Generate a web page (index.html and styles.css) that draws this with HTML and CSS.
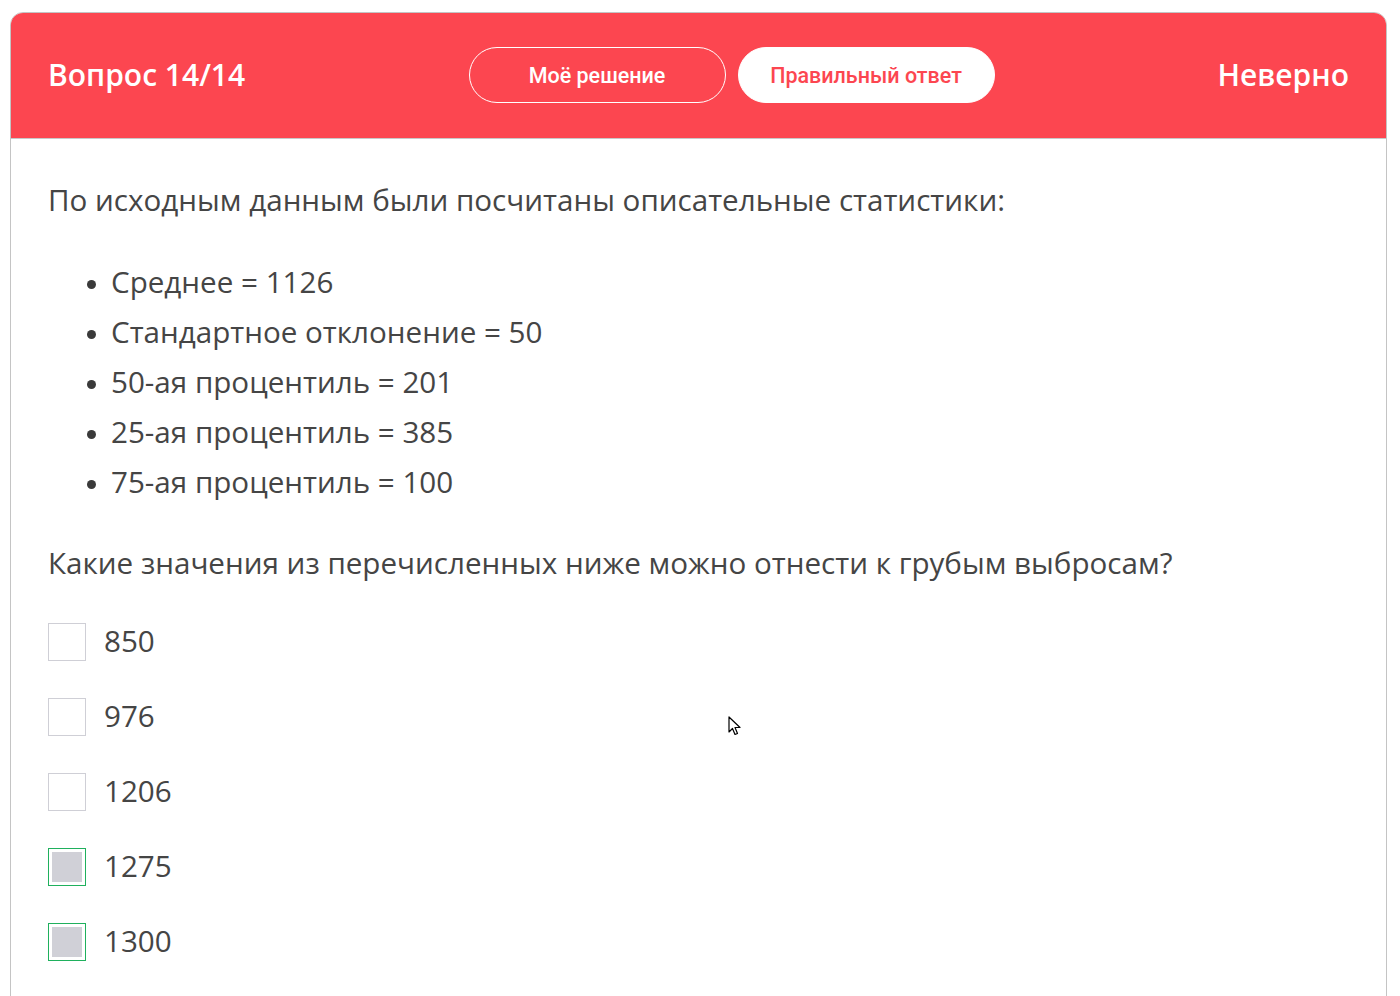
FILE: index.html
```html
<!DOCTYPE html>
<html lang="ru">
<head>
<meta charset="utf-8">
<title>Вопрос 14/14</title>
<link rel="stylesheet" href="styles.css">
</head>
<body>
<div class="card">
  <header class="head">
    <div class="title">Вопрос 14/14</div>
    <div class="tabs">
      <button class="tab tab-outline">Моё решение</button>
      <button class="tab tab-solid">Правильный ответ</button>
    </div>
    <div class="verdict">Неверно</div>
  </header>
  <main class="body">
    <p class="para">По исходным данным были посчитаны описательные статистики:</p>
    <ul class="stats">
      <li>Среднее = 1126</li>
      <li>Стандартное отклонение = 50</li>
      <li>50-ая процентиль = 201</li>
      <li>25-ая процентиль = 385</li>
      <li>75-ая процентиль = 100</li>
    </ul>
    <p class="para q">Какие значения из перечисленных ниже можно отнести к грубым выбросам?</p>
    <div class="options">
      <div class="opt"><span class="box"></span><span class="val">850</span></div>
      <div class="opt"><span class="box"></span><span class="val">976</span></div>
      <div class="opt"><span class="box"></span><span class="val">1206</span></div>
      <div class="opt"><span class="box correct"><span class="fill"></span></span><span class="val">1275</span></div>
      <div class="opt"><span class="box correct"><span class="fill"></span></span><span class="val">1300</span></div>
    </div>
  </main>
</div>
<svg class="cursor" width="14" height="22" viewBox="0 0 14 22"><path d="M1 1 L1 16 L4.5 12.5 L7 18.5 L9.5 17.5 L7 11.5 L12 11.5 Z" fill="#fff" stroke="#000" stroke-width="1.2" stroke-linejoin="round"/></svg>
</body>
</html>
```
FILE: styles.css
```css
html, body {
  margin: 0;
  padding: 0;
  background: #fff;
}
body {
  padding: 12px 13px 0 10px;
  font-family: "Open Sans", "Noto Sans", sans-serif;
  color: #454545;
  position: relative;
  height: 996px;
  box-sizing: border-box;
  overflow: hidden;
}
.card {
  border: 1px solid #c4c4c4;
  border-radius: 13px 13px 0 0;
  overflow: hidden;
  height: 1100px;
}
.head {
  background: #fc4650;
  height: 124px;
  display: flex;
  align-items: center;
  justify-content: space-between;
  padding: 0 37px 1px 37px;
  border-bottom: 1px solid #c8c8c8;
  color: #fff;
}
.title, .verdict {
  font-size: 30px;
  font-weight: 600;
  width: 300px;
  margin-top: -1px;
}
.verdict { text-align: right; }
.tabs {
  display: flex;
  gap: 12px;
  margin-left: 66px;
}
.tab {
  width: 257px;
  height: 56px;
  border-radius: 28px;
  font-family: "Roboto", "Noto Sans", sans-serif;
  font-size: 21.5px;
  font-weight: 500;
  cursor: pointer;
  padding: 0;
}
.tab-outline {
  background: transparent;
  border: 1px solid #fff;
  color: #fff;
}
.tab-solid {
  background: #fff;
  border: 1px solid #fff;
  color: #fc4650;
}
.body {
  padding: 41px 38px 0 37px;
}
.para {
  margin: 0;
  font-size: 29.6px;
  line-height: 40px;
}
.stats {
  margin: 37px 0 0 0;
  padding: 0 0 0 63px;
  font-size: 29.6px;
  line-height: 50px;
}
.stats li::marker { font-size: 24px; color: #3a3a3a; }
.q { margin-top: 36px; }
.options {
  margin-top: 38px;
  display: flex;
  flex-direction: column;
  gap: 37px;
}
.opt {
  display: flex;
  align-items: center;
  gap: 18px;
  height: 38px;
}
.box {
  width: 38px;
  height: 38px;
  box-sizing: border-box;
  border: 1px solid #cfcfd6;
  display: flex;
  align-items: center;
  justify-content: center;
  margin-top: 3px;
}
.box.correct { border: 1px solid #1fb05d; }
.fill {
  width: 30px;
  height: 30px;
  background: #d0d0d7;
}
.val {
  font-size: 29.6px;
}
.cursor {
  position: absolute;
  left: 728px;
  top: 716px;
}
```
